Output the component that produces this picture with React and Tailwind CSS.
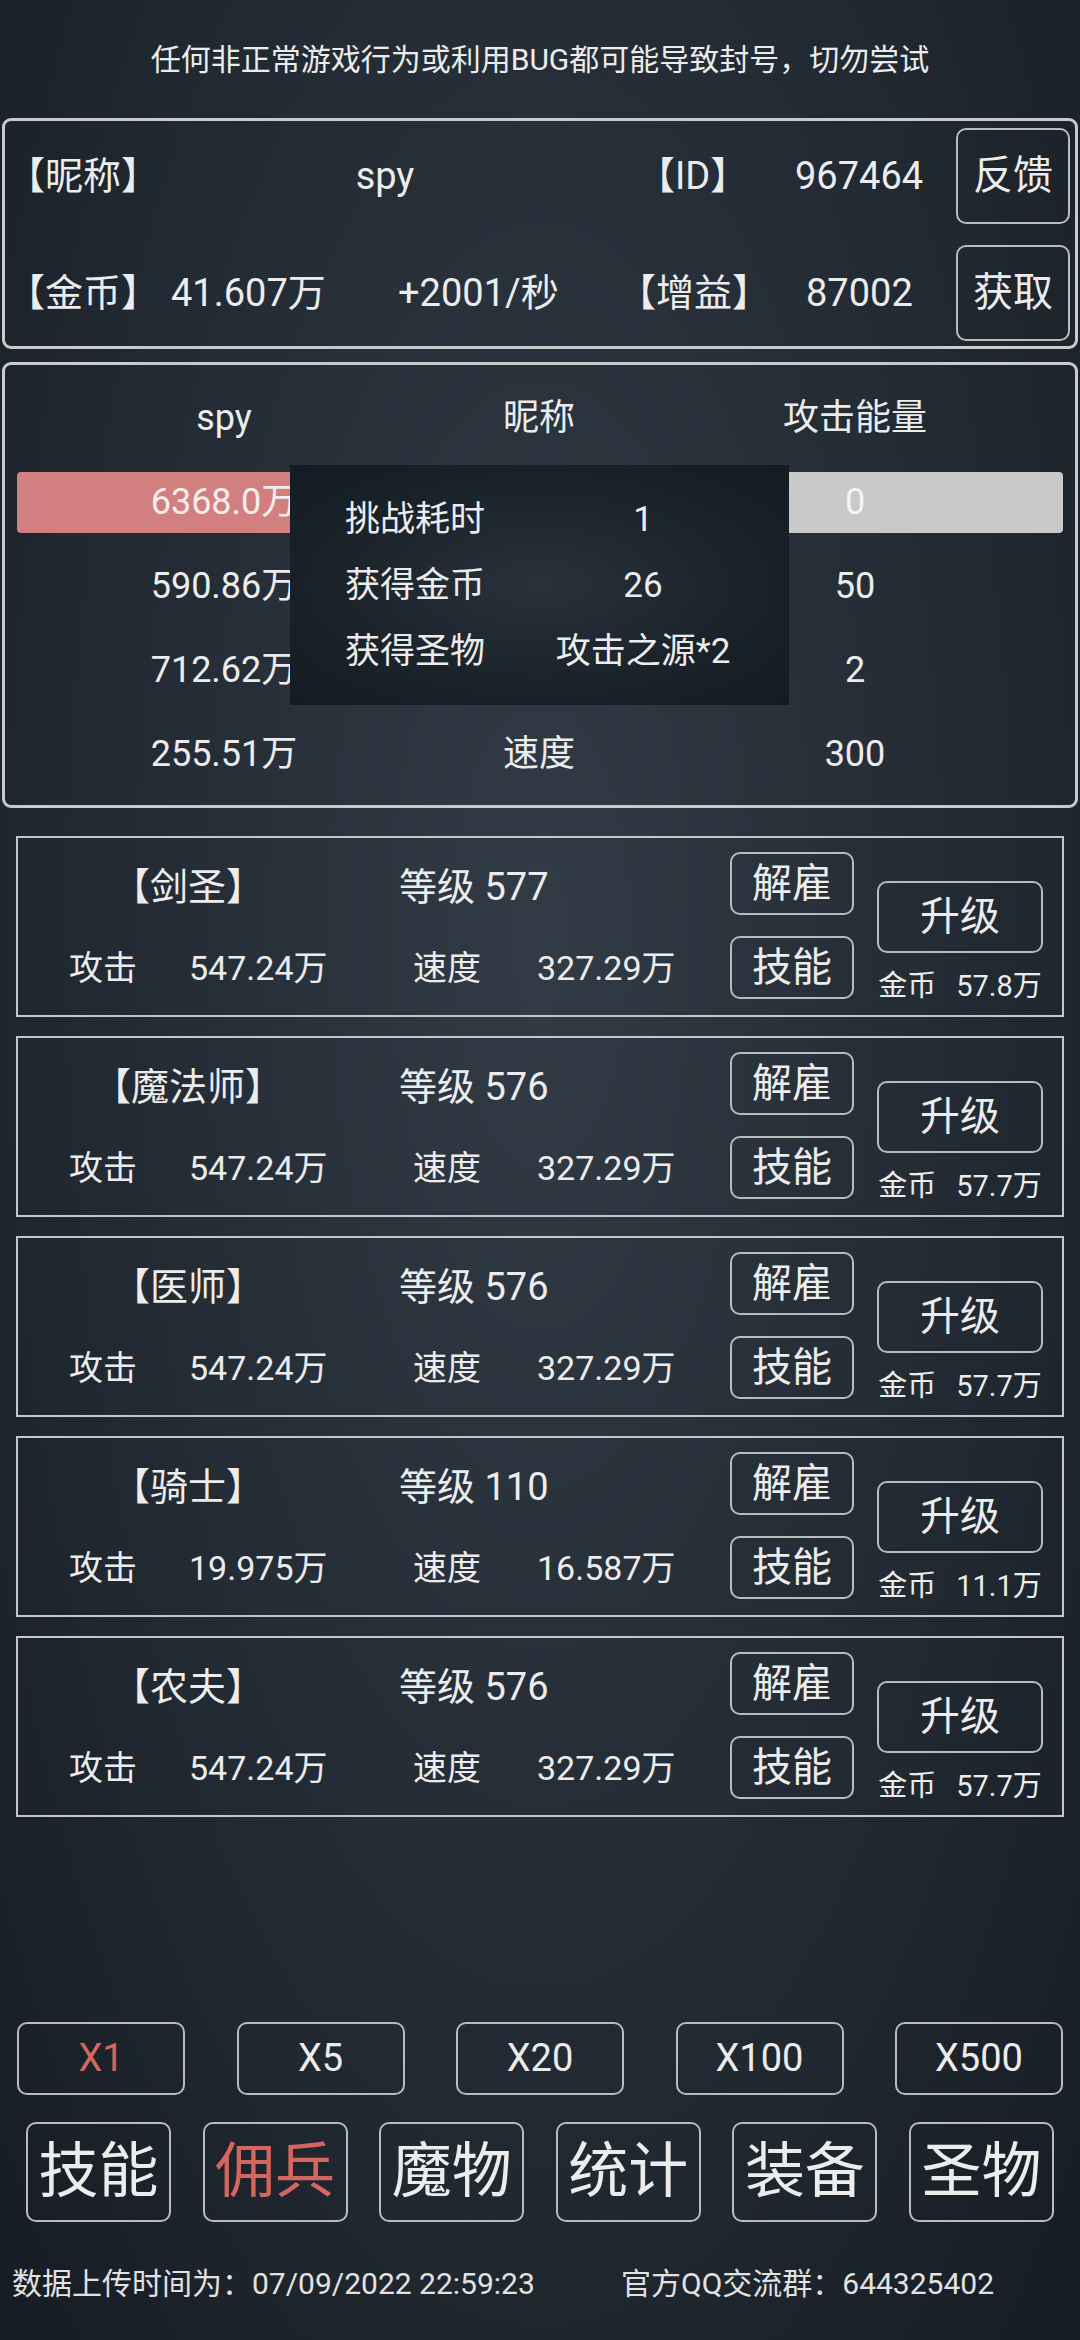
import React from 'react';

const heroes = [
    { name: '【剑圣】', level: 577, atk: '547.24万', spd: '327.29万', cost: '57.8万' },
    { name: '【魔法师】', level: 576, atk: '547.24万', spd: '327.29万', cost: '57.7万' },
    { name: '【医师】', level: 576, atk: '547.24万', spd: '327.29万', cost: '57.7万' },
    { name: '【骑士】', level: 110, atk: '19.975万', spd: '16.587万', cost: '11.1万' },
    { name: '【农夫】', level: 576, atk: '547.24万', spd: '327.29万', cost: '57.7万' },
];

// middle column of the first rows sits under the result popup
const battleRows = [
    ['590.86万', '', '50'],
    ['712.62万', '', '2'],
    ['255.51万', '速度', '300'],
];

const multipliers = ['X1', 'X5', 'X20', 'X100', 'X500'];
const tabs = ['技能', '佣兵', '魔物', '统计', '装备', '圣物'];

const HeroCard = ({ hero }) => (
    <div className="h-[181px] mx-[16px] border-2 border-[#c4c7ca] flex">
        {/* stats */}
        <div className="w-[712px] pt-[14px] flex flex-col gap-[11px]">
            <div className="h-[70px] flex items-center text-[38px]">
                <span className="w-[340px] text-center">{hero.name}</span>
                <span className="pl-[41px]">等级 {hero.level}</span>
            </div>
            <div className="h-[70px] flex items-center text-[34px]">
                <span className="w-[171px] pl-[51px]">攻击</span>
                <span className="w-[224px]">{hero.atk}</span>
                <span className="w-[124px]">速度</span>
                <span>{hero.spd}</span>
            </div>
        </div>

        {/* fire / skill */}
        <div className="w-[124px] pt-[14px] flex flex-col gap-[21px]">
            <div className="h-[63px] rounded-[10px] border-2 border-[#b9bcbf] flex items-center justify-center text-[40px]">解雇</div>
            <div className="h-[63px] rounded-[10px] border-2 border-[#b9bcbf] flex items-center justify-center text-[40px]">技能</div>
        </div>

        {/* upgrade */}
        <div className="ml-[23px] w-[166px] pt-[43px] flex flex-col items-center">
            <div className="w-[166px] h-[72px] rounded-[10px] border-2 border-[#b9bcbf] flex items-center justify-center text-[40px]">升级</div>
            <div className="mt-[17px] h-[34px] flex items-center text-[29px] whitespace-nowrap">
                <span>金币</span>
                <span className="ml-[20px]">{hero.cost}</span>
            </div>
        </div>
    </div>
);

export default function App() {
    return (
        <div className="w-[1080px] h-[2340px] overflow-hidden text-[#ececec] font-['Roboto','Noto_Sans_CJK_SC',sans-serif] bg-[radial-gradient(ellipse_at_50%_40%,#323c46_0%,#252e37_45%,#161c23_100%)]">
            {/* warning */}
            <div className="h-[118px] flex items-center justify-center text-[30px]">
                任何非正常游戏行为或利用BUG都可能导致封号，切勿尝试
            </div>

            {/* account panel */}
            <div className="mx-[2px] h-[231px] border-[3px] border-[#c9cacb] rounded-[9px] pt-[7px] flex flex-col gap-[21px] text-[38px]">
                <div className="h-[96px] flex items-center">
                    <span className="w-[300px] pl-[2px]">【昵称】</span>
                    <span className="w-[160px] text-center">spy</span>
                    <span className="w-[172px]" />
                    <span className="w-[158px]">【ID】</span>
                    <span className="w-[161px]">967464</span>
                    <div className="w-[114px] h-[96px] rounded-[10px] border-2 border-[#b9bcbf] flex items-center justify-center text-[40px]">反馈</div>
                </div>
                <div className="h-[96px] flex items-center">
                    <span className="w-[166px] pl-[2px]">【金币】</span>
                    <span className="w-[227px]">41.607万</span>
                    <span className="w-[220px]">+2001/秒</span>
                    <span className="w-[188px]">【增益】</span>
                    <span className="w-[150px]">87002</span>
                    <div className="w-[114px] h-[96px] rounded-[10px] border-2 border-[#b9bcbf] flex items-center justify-center text-[40px]">获取</div>
                </div>
            </div>

            {/* battle panel */}
            <div className="relative mx-[2px] mt-[13px] h-[446px] border-[3px] border-[#c9cacb] rounded-[9px] pt-[11px] pl-[12px] text-[36px]">
                <div className="h-[84px] grid grid-cols-[414px_216px_416px] items-center text-center">
                    <span>spy</span>
                    <span>昵称</span>
                    <span>攻击能量</span>
                </div>
                <div className="h-[84px] grid grid-cols-[414px_216px_416px] items-center text-center">
                    <div className="h-[61px] rounded-[4px] bg-[#d27f7f] flex items-center justify-center text-[#f6eeee]">6368.0万</div>
                    <span />
                    <div className="h-[61px] rounded-[4px] bg-[#c9c9c9] flex items-center justify-center text-[#f4f4f4]">0</div>
                </div>
                {battleRows.map((row) => (
                    <div key={row[0]} className="h-[84px] grid grid-cols-[414px_216px_416px] items-center text-center">
                        {row.map((cell, i) => (
                            <span key={i}>{cell}</span>
                        ))}
                    </div>
                ))}

                {/* result popup */}
                <div className="absolute left-[285px] top-[100px] w-[499px] h-[240px] pt-[22px] bg-[radial-gradient(ellipse_at_center,#29323b_0%,#1b232b_55%,#141b22_100%)] text-[35px]">
                    {[
                        ['挑战耗时', '1'],
                        ['获得金币', '26'],
                        ['获得圣物', '攻击之源*2'],
                    ].map(([label, value]) => (
                        <div key={label} className="h-[66px] flex items-center">
                            <span className="w-[233px] pl-[55px]">{label}</span>
                            <span className="w-[240px] text-center">{value}</span>
                        </div>
                    ))}
                </div>
            </div>

            {/* mercenaries */}
            <div className="mt-[28px] flex flex-col gap-[19px]">
                {heroes.map((hero) => (
                    <HeroCard key={hero.name} hero={hero} />
                ))}
            </div>

            {/* multipliers */}
            <div className="mt-[205px] px-[17px] flex justify-between">
                {multipliers.map((m, i) => (
                    <div
                        key={m}
                        className={`w-[168px] h-[73px] rounded-[10px] border-2 border-[#b9bcbf] flex items-center justify-center text-[38px] ${i === 0 ? 'text-[#d5665f]' : ''}`}
                    >
                        {m}
                    </div>
                ))}
            </div>

            {/* tabs */}
            <div className="mt-[27px] px-[26px] flex justify-between">
                {tabs.map((t, i) => (
                    <div
                        key={t}
                        className={`w-[145px] h-[100px] rounded-[10px] border-2 border-[#b9bcbf] flex items-center justify-center text-[60px] ${i === 1 ? 'text-[#d5665f]' : ''}`}
                    >
                        {t}
                    </div>
                ))}
            </div>

            {/* footer */}
            <div className="mt-[41px] h-[40px] flex items-center text-[30px] text-[#e2e2e2]">
                <span className="pl-[12px] w-[621px]">数据上传时间为：07/09/2022 22:59:23</span>
                <span>官方QQ交流群：644325402</span>
            </div>
        </div>
    );
}
